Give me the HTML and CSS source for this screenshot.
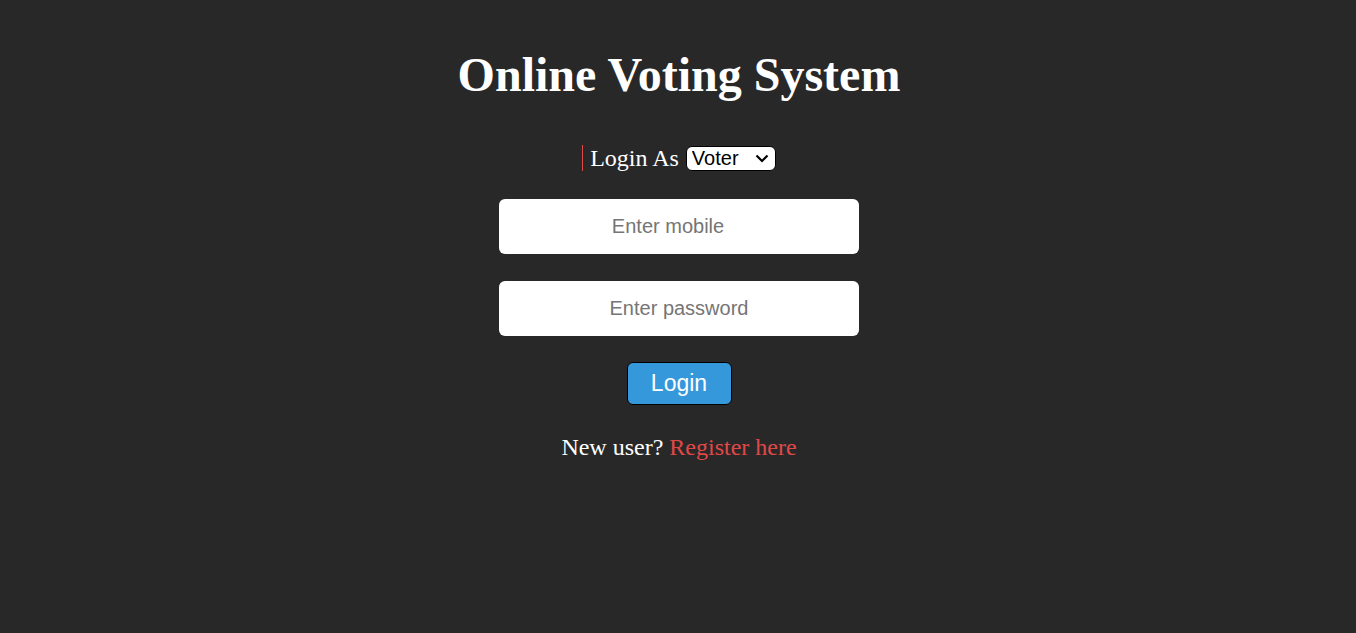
FILE: index.html
```html
<!DOCTYPE html>
<html>
<head>
<meta charset="utf-8">
<title>Online Voting System</title>
<link rel="stylesheet" href="styles.css">
</head>
<body>
<main class="page">
  <h1 class="title">Online Voting System</h1>
  <form class="login-form">
    <div class="role-row">
      <span class="role-bar"></span>
      <label class="role-label" for="role">Login As</label>
      <select id="role" class="role-select">
        <option>Voter</option>
        <option>Group</option>
      </select>
    </div>
    <input class="field field-mobile" type="text" placeholder="Enter mobile">
    <input class="field" type="password" placeholder="Enter password">
    <button class="login-btn" type="button">Login</button>
    <p class="register">New user? <a href="#" class="register-link">Register here</a></p>
  </form>
</main>
</body>
</html>
```

FILE: styles.css
```css
html, body {
  margin: 0;
  padding: 0;
  background: #282828;
  height: 100%;
}
.page {
  display: flex;
  flex-direction: column;
  align-items: center;
  font-family: "Liberation Serif", "Times New Roman", serif;
  color: #ffffff;
  padding-top: 47px;
  padding-left: 2px;
}
.title {
  margin: 0;
  font-size: 48px;
  font-weight: bold;
  line-height: 56px;
}
.login-form {
  display: flex;
  flex-direction: column;
  align-items: center;
  margin-top: 42px;
}
.role-row {
  display: flex;
  align-items: center;
  height: 26px;
}
.role-bar {
  width: 1px;
  height: 26px;
  background: #e04848;
  margin-right: 7px;
}
.role-label {
  font-size: 24px;
  line-height: 26px;
  margin-right: 7px;
}
.role-select {
  appearance: none;
  -webkit-appearance: none;
  box-sizing: border-box;
  font-family: "Liberation Sans", Arial, sans-serif;
  font-size: 20px;
  height: 25px;
  width: 90px;
  border: 1px solid #000;
  border-radius: 6px;
  color: #000;
  padding: 0 0 0 5px;
  background-color: #fff;
  background-image: url("data:image/svg+xml,%3Csvg xmlns='http://www.w3.org/2000/svg' width='14' height='9' viewBox='0 0 14 9'%3E%3Cpath d='M1.5 1.5 L7 7 L12.5 1.5' fill='none' stroke='%23000' stroke-width='2.2'/%3E%3C/svg%3E");
  background-repeat: no-repeat;
  background-position: right 6px center;
  background-size: 14px 9px;
}
.field {
  box-sizing: border-box;
  width: 360px;
  height: 55px;
  margin-top: 28px;
  border: none;
  border-radius: 6px;
  background: #fff;
  text-align: center;
  font-family: "Liberation Sans", Arial, sans-serif;
  font-size: 20px;
  color: #000;
  padding: 0 2px;
}
.field-mobile {
  padding-right: 24px;
}
.field::placeholder {
  color: #757575;
}
.field + .field {
  margin-top: 27px;
}
.login-btn {
  box-sizing: border-box;
  margin-top: 26px;
  width: 105px;
  height: 43px;
  background: #3498db;
  border: 1px solid #000;
  border-radius: 6px;
  color: #fff;
  font-family: "Liberation Sans", Arial, sans-serif;
  font-size: 23px;
}
.register {
  margin: 28px 0 0;
  font-size: 24px;
  line-height: 28px;
}
.register-link {
  color: #e04848;
  text-decoration: none;
}
```
